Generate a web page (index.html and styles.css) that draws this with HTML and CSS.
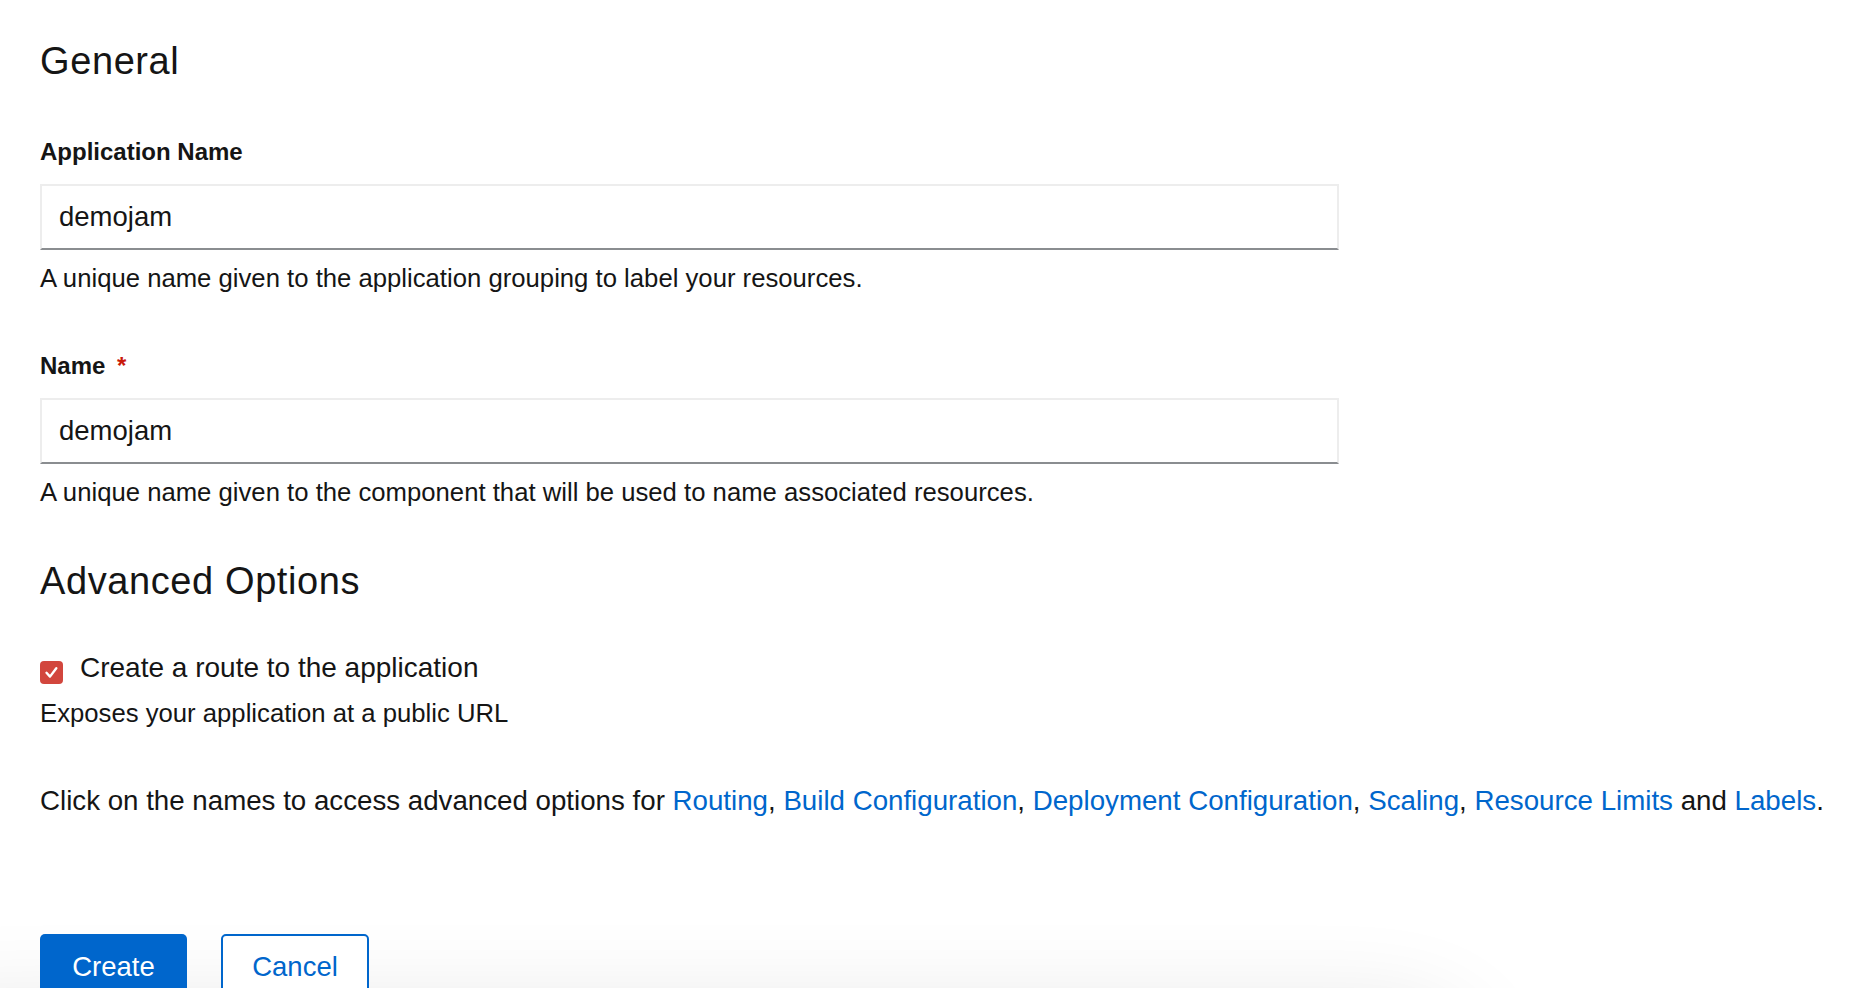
FILE: index.html
```html
<!DOCTYPE html>
<html lang="en">
<head>
<meta charset="utf-8">
<title>Create Application</title>
<link rel="stylesheet" href="styles.css">
</head>
<body>
<main class="page">
  <h1 class="section-title section-title--first">General</h1>

  <div class="field field--first">
    <label class="field-label" for="app-name">Application Name</label>
    <input class="text-input" id="app-name" type="text" value="demojam">
    <p class="helper">A unique name given to the application grouping to label your resources.</p>
  </div>

  <div class="field field--second">
    <label class="field-label" for="name">Name <span class="required">*</span></label>
    <input class="text-input" id="name" type="text" value="demojam">
    <p class="helper">A unique name given to the component that will be used to name associated resources.</p>
  </div>

  <h2 class="section-title section-title--adv">Advanced Options</h2>

  <div class="check-row">
    <span class="checkbox" aria-hidden="true">
      <svg viewBox="0 0 23 23" width="23" height="23"><path d="M6.5 11.8 L10 15.6 L16.3 7.2" fill="none" stroke="#fff" stroke-width="2.4" stroke-linecap="round" stroke-linejoin="round"/></svg>
    </span>
    <span class="check-label">Create a route to the application</span>
  </div>
  <p class="helper helper--check">Exposes your application at a public URL</p>

  <p class="links">Click on the names to access advanced options for <a href="#">Routing</a>, <a href="#">Build Configuration</a>, <a href="#">Deployment Configuration</a>, <a href="#">Scaling</a>, <a href="#">Resource Limits</a> and <a href="#">Labels</a>.</p>

  <div class="actions">
    <button class="btn btn--primary" type="button">Create</button>
    <button class="btn btn--secondary" type="button">Cancel</button>
  </div>
</main>
</body>
</html>
```

FILE: styles.css
```css
html {
  margin: 0;
  padding: 0;
  height: 988px;
  overflow: hidden;
  background: #fff;
}

body {
  margin: 0;
  padding: 0;
  height: 988px;
  overflow: hidden;
  font-family: "Liberation Sans", Arial, sans-serif;
  color: #151515;
}

.page {
  padding: 0 0 0 40px;
  display: flex;
  flex-direction: column;
  align-items: flex-start;
}

.section-title {
  margin: 0;
  font-size: 38px;
  line-height: 46px;
  font-weight: 400;
  letter-spacing: 0.6px;
}

.section-title--first { margin-top: 38px; }
.section-title--adv { margin-top: 50px; }

.field {
  display: flex;
  flex-direction: column;
  align-items: flex-start;
}

.field--first { margin-top: 54px; }
.field--second { margin-top: 58px; }

.field-label {
  font-size: 24px;
  line-height: 28px;
  font-weight: 700;
  margin-bottom: 18px;
}

.required {
  color: #c9190b;
  margin-left: 5px;
}

.text-input {
  box-sizing: border-box;
  width: 1299px;
  height: 66px;
  margin: 0;
  padding: 0 17px;
  border: 2px solid #ededed;
  border-bottom: 2px solid #8a8d90;
  border-radius: 0;
  font-family: "Liberation Sans", Arial, sans-serif;
  font-size: 27.5px;
  color: #151515;
  background: #fff;
  outline: none;
}

.helper {
  margin: 12px 0 0;
  font-size: 25.7px;
  line-height: 32px;
}

.check-row {
  display: flex;
  align-items: center;
  gap: 17px;
  margin-top: 47px;
  height: 34px;
}

.checkbox {
  width: 23px;
  height: 23px;
  border-radius: 4px;
  background: #d2463d;
  display: flex;
  margin-top: 9px;
}

.check-label {
  font-size: 28px;
  line-height: 34px;
}

.helper--check { margin-top: 12px; }

.links {
  margin: 55px 0 0;
  font-size: 27.7px;
  line-height: 34px;
  white-space: nowrap;
}

.links a {
  color: #0066cc;
  text-decoration: none;
}

.actions {
  position: relative;
  isolation: isolate;
  display: flex;
  gap: 34px;
  margin-top: 116px;
}

.actions::before {
  content: "";
  position: absolute;
  left: -140px;
  top: 90px;
  width: 1560px;
  height: 120px;
  border-radius: 60px;
  background: #ddd;
  box-shadow: 0 0 100px 10px rgba(0, 0, 0, 0.12);
  z-index: -1;
}

.btn {
  box-sizing: border-box;
  height: 66px;
  width: 148px;
  border-radius: 5px;
  font-family: "Liberation Sans", Arial, sans-serif;
  font-size: 27.5px;
  display: flex;
  align-items: flex-start;
  justify-content: center;
  padding: 14px 0 0;
  line-height: 34px;
  cursor: pointer;
}

.btn--primary {
  width: 147px;
  background: #0066cc;
  color: #fff;
  border: 0;
  padding-top: 16px;
}

.btn--secondary {
  background: #fff;
  color: #0066cc;
  border: 2px solid #0066cc;
}
```
